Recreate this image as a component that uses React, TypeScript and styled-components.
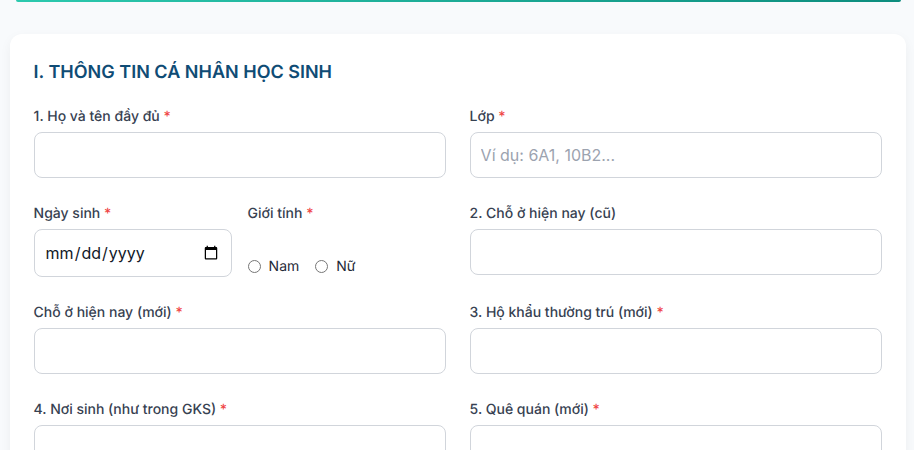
import React from "react";
import styled, { createGlobalStyle } from "styled-components";

const Global = createGlobalStyle`
  html, body { margin: 0; padding: 0; height: 450px; overflow: hidden; background: #f8fafc; }
  * { box-sizing: border-box; }
  body { font-family: Inter, "Noto Sans", sans-serif; text-rendering: geometricPrecision; }
`;

const Page = styled.div`
  height: 450px;
  overflow: hidden;
  padding: 0 8.4px 0 9.6px;
  display: flex;
  flex-direction: column;
`;

const TopBar = styled.div`
  height: 2px;
  margin: 0 5px 32px 6px;
  border-radius: 0 0 6px 6px;
  background: linear-gradient(90deg, #2cc9ae 0%, #0d8d7e 100%);
  flex: none;
`;

const Card = styled.section`
  background: #ffffff;
  border-radius: 12px;
  padding: 24px;
  box-shadow: 0 4px 12px rgba(15, 23, 42, 0.05);
  flex: none;
`;

const Title = styled.h2`
  margin: 1px 0 18px;
  font-size: 18px;
  line-height: 28px;
  font-weight: 600;
  color: #0f4c75;
`;

const Grid = styled.div`
  display: grid;
  grid-template-columns: 1fr 1fr;
  gap: 24px;
`;

const SubGrid = styled.div`
  display: grid;
  grid-template-columns: 1fr 1fr;
  gap: 16px;
`;

const Field = styled.div`
  display: flex;
  flex-direction: column;
`;

const Label = styled.label`
  display: block;
  padding-top: 1px;
  font-size: 14px;
  line-height: 22px;
  font-weight: 500;
  color: #374151;
  margin-bottom: 4px;
`;

const Star = styled.span`
  color: #ef4444;
`;

const Input = styled.input`
  width: 100%;
  height: ${(p) => (p.type === "date" ? "48px" : "46px")};
  padding: 0 10px;
  border: 1px solid #d1d5db;
  border-radius: 8px;
  background: #ffffff;
  font-family: inherit;
  font-size: 16px;
  color: #111827;
  outline: none;
  &::placeholder { color: #9ca3af; }
`;

const RadioRow = styled.div`
  flex: 1;
  display: flex;
  align-items: flex-end;
  gap: 16px;
`;

const RadioLabel = styled.label`
  display: inline-flex;
  align-items: center;
  font-size: 14px;
  line-height: 21px;
  color: #1f2937;
  input { margin: 0 8px 0 0; width: 13px; height: 13px; }
`;

function TextField({ label, required = true, placeholder }: { label: string; required?: boolean; placeholder?: string }) {
  return (
    <Field>
      <Label>
        {label}
        {required && <Star> *</Star>}
      </Label>
      <Input type="text" placeholder={placeholder} />
    </Field>
  );
}

export default function App() {
  return (
    <>
      <Global />
      <Page>
        <TopBar />
        <Card>
          <Title>I. THÔNG TIN CÁ NHÂN HỌC SINH</Title>
          <Grid>
            <TextField label="1. Họ và tên đầy đủ" />
            <TextField label="Lớp" placeholder="Ví dụ: 6A1, 10B2..." />
            <SubGrid>
              <Field>
                <Label>Ngày sinh<Star> *</Star></Label>
                <Input type="date" />
              </Field>
              <Field>
                <Label>Giới tính<Star> *</Star></Label>
                <RadioRow>
                  <RadioLabel><input type="radio" name="gender" />Nam</RadioLabel>
                  <RadioLabel><input type="radio" name="gender" />Nữ</RadioLabel>
                </RadioRow>
              </Field>
            </SubGrid>
            <TextField label="2. Chỗ ở hiện nay (cũ)" required={false} />
            <TextField label="Chỗ ở hiện nay (mới)" />
            <TextField label="3. Hộ khẩu thường trú (mới)" />
            <TextField label="4. Nơi sinh (như trong GKS)" />
            <TextField label="5. Quê quán (mới)" />
          </Grid>
        </Card>
      </Page>
    </>
  );
}
